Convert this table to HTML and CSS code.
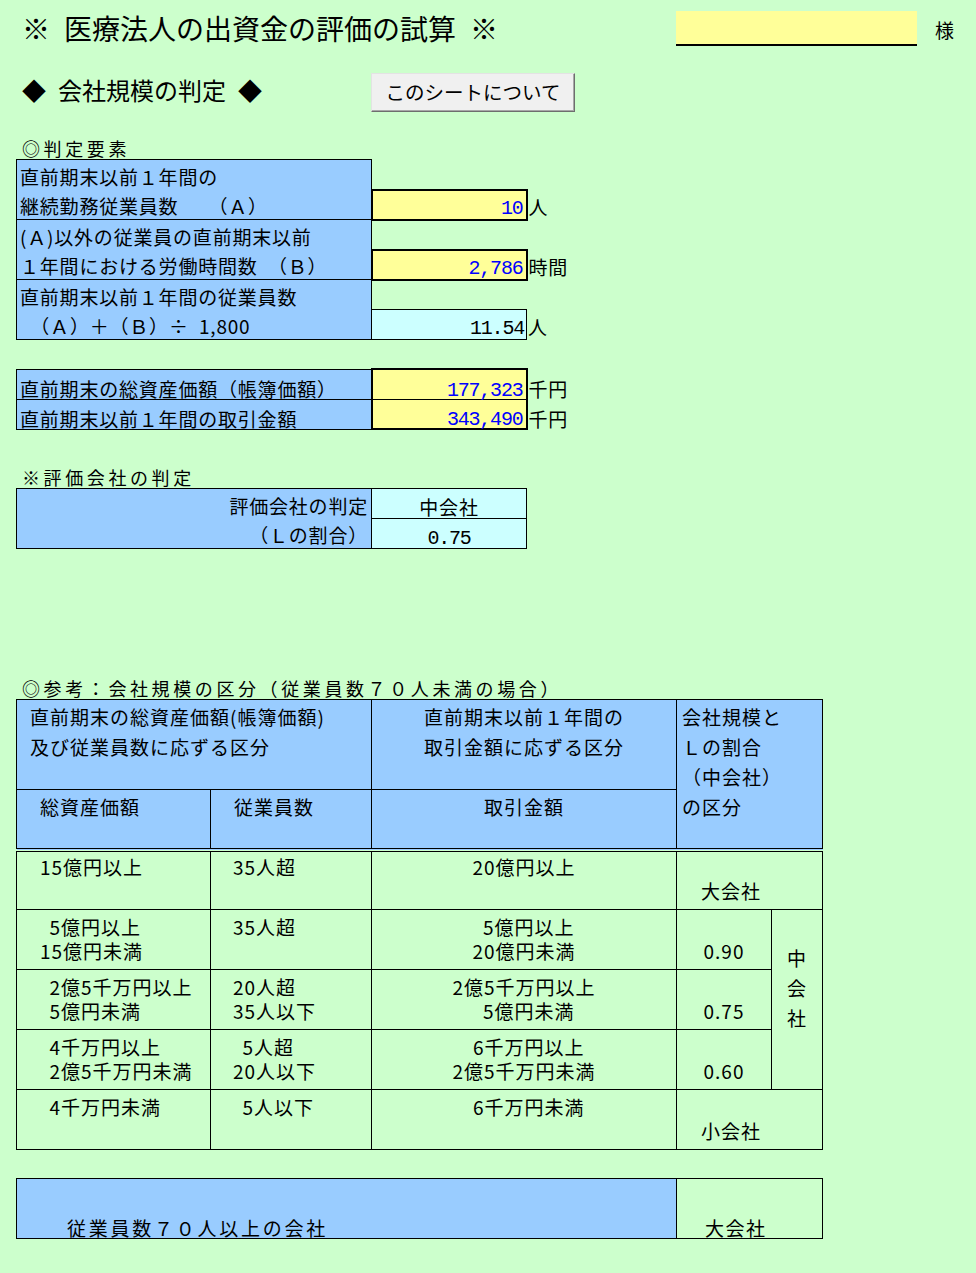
FILE: index.html
```html
<!DOCTYPE html>
<html lang="ja">
<head>
<meta charset="utf-8">
<title>医療法人の出資金の評価の試算</title>
<link rel="stylesheet" href="styles.css">
</head>
<body>
<div class="sheet">
  <header class="title-row">
    <h1 class="title">※&ensp;医療法人の出資金の評価の試算&ensp;※</h1>
    <div class="name-box"></div>
    <span class="sama">様</span>
  </header>

  <div class="sub-row">
    <h2 class="subtitle">◆&ensp;会社規模の判定&ensp;◆</h2>
    <button class="btn" type="button">このシートについて</button>
  </div>

  <p class="label label-first">◎判定要素</p>
  <table class="sheet-table calc">
    <colgroup><col class="col-item"><col class="col-value"><col class="col-unit"></colgroup>
    <tr><td class="item first">直前期末以前１年間の</td><td></td><td></td></tr>
    <tr><td class="item last">継続勤務従業員数　&ensp;（Ａ）</td><td class="input num">10</td><td class="unit">人</td></tr>
    <tr><td class="item first">(Ａ)以外の従業員の直前期末以前</td><td></td><td></td></tr>
    <tr><td class="item last">１年間における労働時間数&ensp;（Ｂ）</td><td class="input num">2,786</td><td class="unit">時間</td></tr>
    <tr><td class="item first">直前期末以前１年間の従業員数</td><td></td><td></td></tr>
    <tr><td class="item last">　（Ａ）＋（Ｂ）÷&ensp;1,800</td><td class="result num right">11.54</td><td class="unit">人</td></tr>
  </table>

  <table class="sheet-table calc assets">
    <colgroup><col class="col-item"><col class="col-value"><col class="col-unit"></colgroup>
    <tr><td class="item first last">直前期末の総資産価額（帳簿価額）</td><td class="input num pair-top">177,323</td><td class="unit">千円</td></tr>
    <tr><td class="item first last">直前期末以前１年間の取引金額</td><td class="input num pair-bottom">343,490</td><td class="unit">千円</td></tr>
  </table>

  <p class="label label-judge">※評価会社の判定</p>
  <table class="sheet-table calc judge">
    <colgroup><col class="col-item"><col class="col-value"></colgroup>
    <tr><td class="item first right">評価会社の判定</td><td class="result center">中会社</td></tr>
    <tr><td class="item last right">（Ｌの割合）</td><td class="result num center">0.75</td></tr>
  </table>

  <p class="label label-ref">◎参考：会社規模の区分（従業員数７０人未満の場合）</p>
  <table class="sheet-table ref">
    <colgroup><col class="c-assets"><col class="c-emp"><col class="c-trade"><col class="c-ratio"><col class="c-mid"></colgroup>
    <thead>
      <tr class="hr1">
        <th colspan="2" class="h-top h-assets">直前期末の総資産価額(帳簿価額)<br>及び従業員数に応ずる区分</th>
        <th class="h-top center">直前期末以前１年間の<br>取引金額に応ずる区分</th>
        <th colspan="2" rowspan="2" class="h-side">会社規模と<br>Ｌの割合<br>（中会社）<br>の区分</th>
      </tr>
      <tr class="hr2">
        <th class="h-sub">総資産価額</th>
        <th class="h-sub">従業員数</th>
        <th class="h-sub center">取引金額</th>
      </tr>
    </thead>
    <tbody>
      <tr class="first-row">
        <td class="amt">15億円以上</td>
        <td class="emp">35人超</td>
        <td class="trade">20億円以上</td>
        <td colspan="2" class="size">大会社</td>
      </tr>
      <tr>
        <td class="amt"><span class="fs"></span>5億円以上<br>15億円未満</td>
        <td class="emp">35人超</td>
        <td class="trade"><span class="fs"></span>5億円以上<br>20億円未満</td>
        <td class="ratio">0.90</td>
        <td rowspan="3" class="mid">中<br>会<br>社</td>
      </tr>
      <tr>
        <td class="amt"><span class="fs"></span>2億5千万円以上<br><span class="fs"></span>5億円未満</td>
        <td class="emp">20人超<br>35人以下</td>
        <td class="trade">2億5千万円以上<br><span class="fs"></span>5億円未満</td>
        <td class="ratio">0.75</td>
      </tr>
      <tr>
        <td class="amt"><span class="fs"></span>4千万円以上<br><span class="fs"></span>2億5千万円未満</td>
        <td class="emp"><span class="fs"></span>5人超<br>20人以下</td>
        <td class="trade"><span class="fs"></span>6千万円以上<br>2億5千万円未満</td>
        <td class="ratio">0.60</td>
      </tr>
      <tr>
        <td class="amt"><span class="fs"></span>4千万円未満</td>
        <td class="emp"><span class="fs"></span>5人以下</td>
        <td class="trade"><span class="fs"></span>6千万円未満</td>
        <td colspan="2" class="size">小会社</td>
      </tr>
    </tbody>
  </table>

  <table class="sheet-table large">
    <colgroup><col class="c-wide"><col class="c-size"></colgroup>
    <tr>
      <td class="wide">従業員数７０人以上の会社</td>
      <td class="size-large">大会社</td>
    </tr>
  </table>
</div>
</body>
</html>
```

FILE: styles.css
```css
* { box-sizing: border-box; }

html, body {
  margin: 0;
  padding: 0;
}

body {
  background: #CCFFCC;
  color: #000;
  font-family: "Noto Sans CJK JP", "Noto Sans", sans-serif;
  width: 976px;
  min-height: 1273px;
}

.sheet {
  padding-top: 11px;
}

/* ---------- heading rows ---------- */
.title-row {
  display: flex;
  align-items: center;
  height: 34px;
  padding-left: 22px;
}

.title {
  margin: 0;
  width: 654px;
  font-size: 28px;
  font-weight: normal;
  line-height: 34px;
  white-space: nowrap;
}

.name-box {
  width: 241px;
  height: 35px;
  background: #FFFF99;
  border-bottom: 2px solid #000;
}

.sama {
  margin: 4px 0 0 18px;
  font-size: 19px;
  line-height: 34px;
}

.sub-row {
  display: flex;
  align-items: flex-start;
  height: 39px;
  margin-top: 28px;
  padding-left: 22px;
}

.subtitle {
  margin: 0;
  width: 349px;
  font-size: 24px;
  font-weight: normal;
  line-height: 33px;
  white-space: nowrap;
}

.btn {
  width: 204px;
  height: 39px;
  margin: 0;
  padding: 0 0 3px;
  background: #F0F0F0;
  border: 1px solid;
  border-color: #E3E3E3 #6E6E6E #6E6E6E #E3E3E3;
  box-shadow: inset -1px -1px 0 #A8A8A8;
  font-family: "Noto Sans CJK JP", sans-serif;
  font-size: 19.5px;
  color: #000;
}

/* ---------- section labels ---------- */
.label {
  margin: 0;
  padding-left: 22px;
  height: 22px;
  font-size: 18px;
  line-height: 22px;
  letter-spacing: 3.6px;
  white-space: nowrap;
}

.label-first { margin-top: 25px; }
.label-judge { margin-top: 36px; }
.label-ref { margin-top: 128px; }

/* ---------- spreadsheet tables ---------- */
.sheet-table {
  border-collapse: collapse;
  table-layout: fixed;
  margin-left: 16px;
  font-size: 19px;
  letter-spacing: 0.8px;
}

:where(.sheet-table) td,
:where(.sheet-table) th {
  padding: 0;
  font-weight: normal;
  white-space: nowrap;
}

.calc { width: 570px; }
.calc.assets { margin-top: 28px; }
.calc.judge { width: 510px; }
.calc tr { height: 30px; }
.calc td {
  vertical-align: bottom;
  line-height: 26px;
}
.calc td.num { line-height: 21px; }
.calc.assets td { line-height: 20px; }
.calc.assets td.num { line-height: 16px; }
.calc.judge td.center { line-height: 22px; }
.calc.judge td.num { line-height: 18px; }

.col-item { width: 355px; }
.col-value { width: 155px; }
.col-unit { width: 60px; }

.calc .item {
  background: #99CCFF;
  border-left: 1px solid #000;
  border-right: 1px solid #000;
  padding-left: 3px;
}
.calc .item.first { border-top: 1px solid #000; }
.calc .item.last { border-bottom: 1px solid #000; }
.calc .item.right {
  text-align: right;
  padding-right: 3px;
}

.calc .input {
  background: #FFFF99;
  border: 2px solid #000;
  color: #0000FF;
  text-align: right;
  padding-right: 3px;
}
.calc .input.pair-top { border-bottom-width: 1px; }
.calc .input.pair-bottom { border-top-width: 1px; }

.calc .result {
  background: #CCFFFF;
  border: 1px solid #000;
}
.calc .result.right {
  text-align: right;
  padding-right: 2px;
}
.center { text-align: center; }

.num {
  font-family: "Liberation Mono", "DejaVu Sans Mono", monospace;
  font-size: 20px;
  letter-spacing: -1.2px;
}

.calc .unit { padding-left: 1px; }

/* ---------- reference table ---------- */
.ref {
  width: 806px;
  letter-spacing: 1px;
}
.c-assets { width: 194px; }
.c-emp { width: 161px; }
.c-trade { width: 305px; }
.c-ratio { width: 95px; }
.c-mid { width: 51px; }

.ref th,
.ref td {
  border: 1px solid #000;
}

.ref .hr1 { height: 90px; }
.ref .hr2 { height: 60px; }
.ref tbody tr { height: 60px; }

.ref th {
  background: #99CCFF;
  text-align: left;
  vertical-align: top;
  line-height: 30px;
  padding-top: 2px;
}
.ref th.center { text-align: center; }

.ref .hr2 th,
.ref .h-side {
  border-bottom: 4px double #000;
}

.ref .h-assets { padding-left: 13px; }
.ref .h-sub { padding-left: 23px; }
.ref .h-sub.center { padding-left: 0; }
.ref .h-side { padding-left: 5px; }

.ref td {
  vertical-align: top;
  line-height: 24px;
  padding-top: 5px;
}
.ref .first-row td { padding-top: 3px; }

.ref .amt { padding-left: 23px; }
.ref .emp { padding-left: 22px; }
.ref .trade { text-align: center; }

.ref td.ratio {
  text-align: center;
  vertical-align: bottom;
  padding: 0 0 6px;
}

.ref td.size {
  vertical-align: bottom;
  padding: 0 0 6px 24px;
}

.ref td.mid {
  text-align: center;
  line-height: 30px;
  padding-top: 33px;
}

.fs {
  display: inline-block;
  width: 0.5em;
}

/* ---------- 70+ employees ---------- */
.large {
  width: 806px;
  margin-top: 28px;
}
.c-wide { width: 660px; }
.c-size { width: 146px; }
.large tr { height: 60px; }
.large td {
  border: 1px solid #000;
  vertical-align: bottom;
  line-height: 20px;
}
.large .wide {
  background: #99CCFF;
  padding-left: 50px;
  letter-spacing: 2.75px;
}
.large .size-large {
  padding-left: 28px;
  letter-spacing: 1.5px;
}
```
